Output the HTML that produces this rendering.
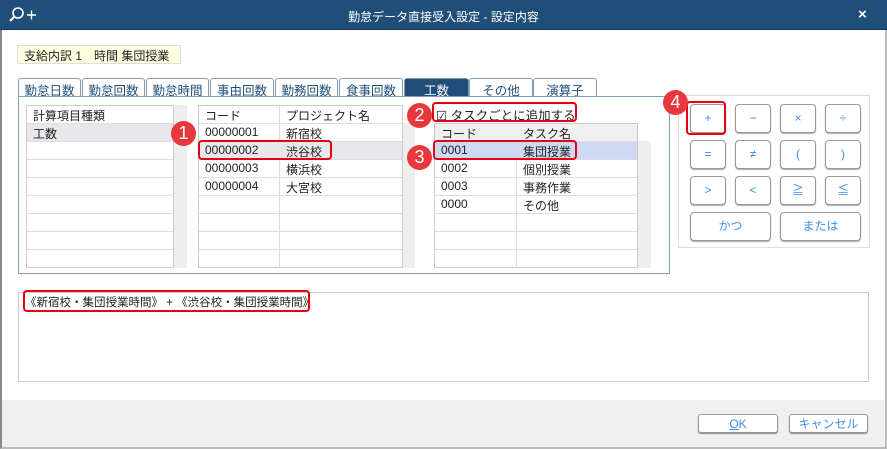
<!DOCTYPE html>
<html><head><meta charset="utf-8"><style>
*{box-sizing:border-box;margin:0;padding:0}
body{width:887px;height:449px;position:relative;background:#fff;font-family:"Liberation Sans","Noto Sans CJK JP",sans-serif;font-size:12px;color:#222;overflow:hidden}
.a{position:absolute}
.title{left:0;top:0;width:887px;height:30px;background:#1f4e79;border-bottom:1px solid #15385a}
.title .t{left:0;width:887px;top:8px;text-align:center;color:#fff;font-size:12px}
.frame{left:0;top:30px;width:887px;height:419px;border-left:2px solid #888;border-right:2px solid #bbb;border-bottom:2px solid #bbb}
.lbl{left:17px;top:45px;width:164px;height:19px;background:#fdfde0;border:1px solid #ddd;padding:1px 6px;font-size:12px}
.tab{top:78px;height:19px;border:1px solid #7f9db9;border-bottom:none;border-radius:3px 3px 0 0;text-align:center;color:#1f4e79;font-size:12.5px;padding-top:1px;background:#fff}
.tab.on{background:#1f4e79;color:#fff}
.panel{left:18px;top:96px;width:652px;height:178px;border:1px solid #7f9db9}
.grid{border:1px solid #ccc;background:#fff}
.row{position:absolute;left:0;right:0;height:18px;border-bottom:1px solid #ddd;padding:1px 6px;white-space:nowrap}
.row span{top:1px!important}
.sb{background:#eee}
.c2{position:absolute;top:0;bottom:0;border-left:1px solid #ddd}
.badge{width:25px;height:25px;border-radius:13px;background:#e8383d;color:#fff;font-size:18px;text-align:center;line-height:25px;font-family:"Liberation Sans",sans-serif}
.red{border:2px solid #e60012;border-radius:4px}
.btn{width:36px;height:29px;border:1px solid #999;border-radius:4px;background:#fff;color:#3d8ee8;text-align:center;line-height:27px;font-size:12px;box-shadow:0 1px 1px #aaa}
.ob{border:1px solid #999;border-radius:3px;background:#fff;color:#3d8ee8;text-align:center;line-height:18px;box-shadow:0 1px 1px #888}
</style></head><body>
<div class="a frame"></div>
<div class="a title">
 <svg class="a" style="left:8px;top:6px" width="30" height="18" viewBox="0 0 30 18"><circle cx="10" cy="7" r="5" fill="none" stroke="#fff" stroke-width="1.6"/><path d="M6.5 10.5 L2 15" stroke="#fff" stroke-width="2"/><path d="M19 9h9M23.5 4.5v9" stroke="#fff" stroke-width="1.4"/></svg>
 <div class="a t">勤怠データ直接受入設定 - 設定内容</div>
 <div class="a" style="left:858px;top:6px;color:#fff;font-size:15px;font-weight:bold">×</div>
</div>
<div class="a lbl">支給内訳 1　時間 集団授業</div>

<div class="a tab" style="left:18px;width:63px">勤怠日数</div>
<div class="a tab" style="left:82px;width:63px">勤怠回数</div>
<div class="a tab" style="left:146px;width:63px">勤怠時間</div>
<div class="a tab" style="left:210px;width:64px">事由回数</div>
<div class="a tab" style="left:275px;width:63px">勤務回数</div>
<div class="a tab" style="left:339px;width:64px">食事回数</div>
<div class="a tab on" style="left:404px;width:65px">工数</div>
<div class="a tab" style="left:469px;width:64px">その他</div>
<div class="a tab" style="left:533px;width:64px">演算子</div>
<div class="a panel"></div>

<div class="a grid" style="left:26px;top:105px;width:148px;height:163px">
 <div class="row" style="top:0">計算項目種類</div>
 <div class="row" style="top:18px;background:#e8e8ec">工数</div>
 <div class="row" style="top:36px"></div><div class="row" style="top:54px"></div><div class="row" style="top:72px"></div><div class="row" style="top:90px"></div><div class="row" style="top:108px"></div><div class="row" style="top:126px"></div>
</div>
<div class="a sb" style="left:174px;top:105px;width:13px;height:163px"></div>

<div class="a grid" style="left:198px;top:105px;width:205px;height:163px">
 <div class="c2" style="left:80px"></div>
 <div class="row" style="top:0">コード<span class="a" style="left:87px">プロジェクト名</span></div>
 <div class="row" style="top:18px">00000001<span class="a" style="left:87px">新宿校</span></div>
 <div class="row" style="top:36px;background:#e8e8ec">00000002<span class="a" style="left:87px">渋谷校</span></div>
 <div class="row" style="top:54px">00000003<span class="a" style="left:87px">横浜校</span></div>
 <div class="row" style="top:72px">00000004<span class="a" style="left:87px">大宮校</span></div>
 <div class="row" style="top:90px"></div><div class="row" style="top:108px"></div><div class="row" style="top:126px"></div>
</div>
<div class="a sb" style="left:403px;top:123px;width:12px;height:145px"></div>
<div class="a red" style="left:198px;top:140px;width:134px;height:20px"></div>
<div class="a badge" style="left:171px;top:121px">1</div>

<div class="a" style="left:436px;top:105px;font-size:12.5px">☑ タスクごとに追加する</div>
<div class="a red" style="left:432px;top:102px;width:145px;height:20px"></div>
<div class="a badge" style="left:407px;top:103px">2</div>
<div class="a grid" style="left:434px;top:123px;width:204px;height:145px">
 <div class="c2" style="left:81px"></div>
 <div class="row" style="top:0;background:#f0f0f0">コード<span class="a" style="left:88px">タスク名</span></div>
 <div class="row" style="top:18px;background:#cfd9f3">0001<span class="a" style="left:88px">集団授業</span></div>
 <div class="row" style="top:36px">0002<span class="a" style="left:88px">個別授業</span></div>
 <div class="row" style="top:54px">0003<span class="a" style="left:88px">事務作業</span></div>
 <div class="row" style="top:72px">0000<span class="a" style="left:88px">その他</span></div>
 <div class="row" style="top:90px"></div><div class="row" style="top:108px"></div>
</div>
<div class="a sb" style="left:638px;top:141px;width:13px;height:127px"></div>
<div class="a red" style="left:433px;top:140px;width:144px;height:20px"></div>
<div class="a badge" style="left:407px;top:145px">3</div>

<div class="a" style="left:678px;top:95px;width:192px;height:153px;border:1px solid #ddd"></div>
<div class="a btn" style="left:690px;top:104px">+</div>
<div class="a btn" style="left:735px;top:104px">−</div>
<div class="a btn" style="left:780px;top:104px">×</div>
<div class="a btn" style="left:825px;top:104px">÷</div>
<div class="a btn" style="left:690px;top:140px">=</div>
<div class="a btn" style="left:735px;top:140px">≠</div>
<div class="a btn" style="left:780px;top:140px">(</div>
<div class="a btn" style="left:825px;top:140px">)</div>
<div class="a btn" style="left:690px;top:176px">&gt;</div>
<div class="a btn" style="left:735px;top:176px">&lt;</div>
<div class="a btn" style="left:780px;top:176px">≧</div>
<div class="a btn" style="left:825px;top:176px">≦</div>
<div class="a btn" style="left:690px;top:212px;width:81px">かつ</div>
<div class="a btn" style="left:780px;top:212px;width:81px">または</div>
<div class="a red" style="left:686px;top:101px;width:40px;height:34px"></div>
<div class="a badge" style="left:663px;top:90px">4</div>

<div class="a" style="left:18px;top:292px;width:851px;height:90px;border:1px solid #ccc"></div>
<div class="a" style="left:25px;top:294px;font-size:11.5px">《新宿校・集団授業時間》 + 《渋谷校・集団授業時間》</div>
<div class="a red" style="left:23px;top:290px;width:287px;height:22px"></div>

<div class="a" style="left:2px;top:400px;width:883px;height:47px;background:#f0f0f0"></div>
<div class="a ob" style="left:698px;top:414px;width:80px;height:19px"><u>O</u>K</div>
<div class="a ob" style="left:789px;top:414px;width:79px;height:19px">キャンセル</div>
</body></html>
